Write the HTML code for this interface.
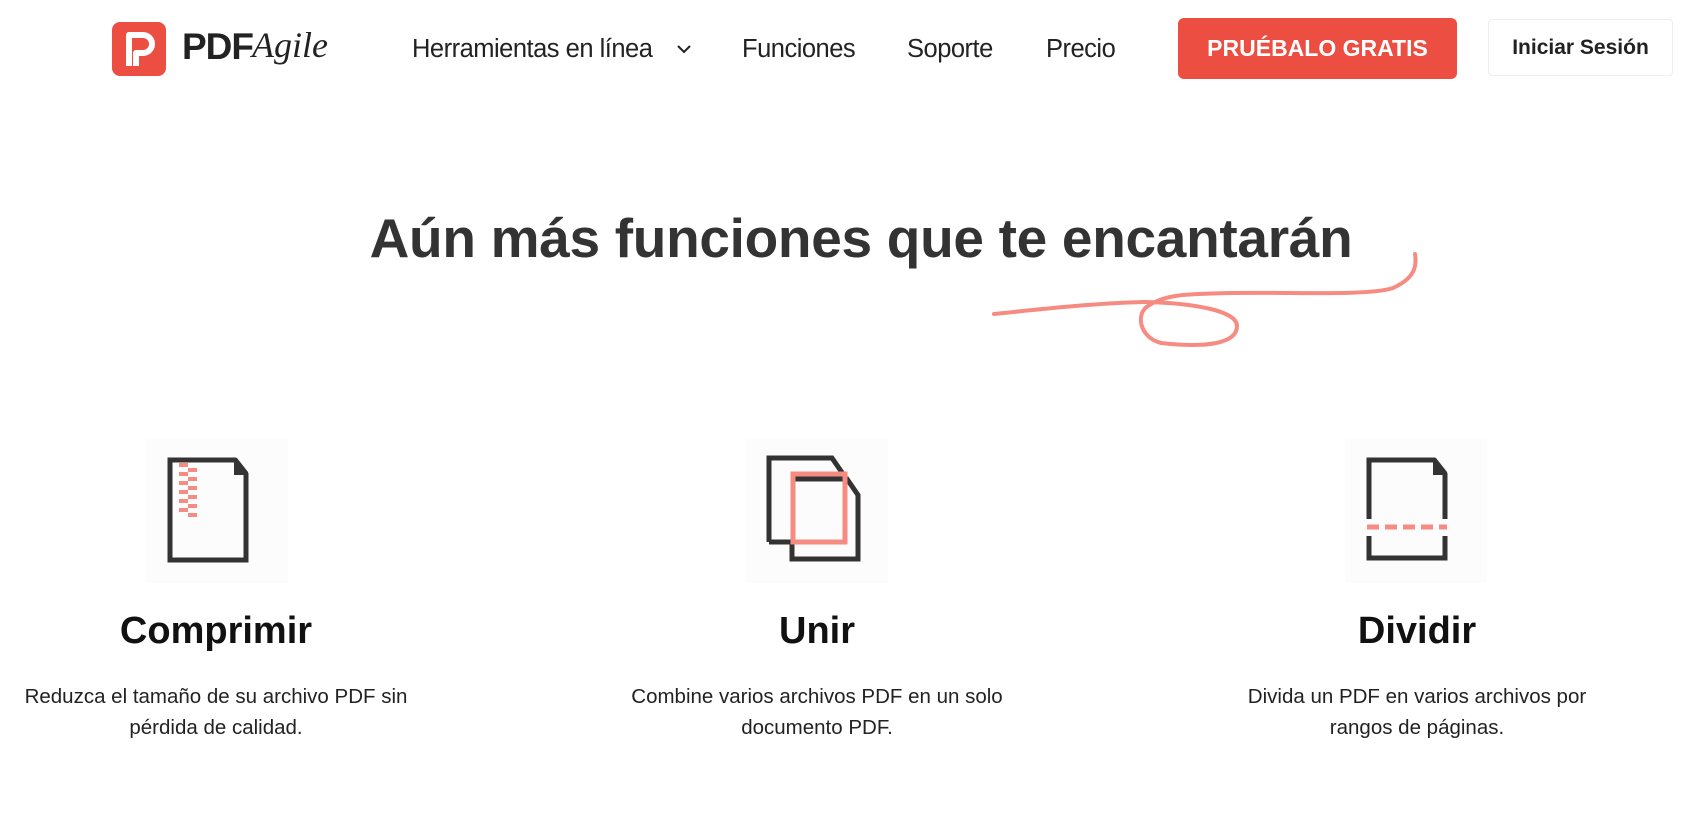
<!DOCTYPE html>
<html><head><meta charset="utf-8"><style>
*{margin:0;padding:0;box-sizing:border-box}
body{width:1693px;height:816px;background:#fff;font-family:"Liberation Sans",sans-serif;color:#333;position:relative;overflow:hidden}
.a{position:absolute}
.nav{font-size:25.5px;color:#222;top:35px;letter-spacing:-0.5px}
.btn{left:1178px;top:18px;width:279px;height:61px;background:#ec4e41;border-radius:6px;color:#fff;font-weight:bold;font-size:23px;text-align:center;line-height:61px}
.btn2{left:1488px;top:19px;width:185px;height:57px;border:1px solid #eee;border-radius:4px;font-weight:bold;font-size:21px;text-align:center;line-height:55px;color:#222}
h1{position:absolute;left:0;width:1722px;top:206px;text-align:center;font-size:55px;font-weight:bold;color:#333;letter-spacing:-0.3px}
.box{position:absolute;width:142px;height:144px;background:#fcfcfc;top:439px}
.t{position:absolute;width:500px;text-align:center;font-weight:bold;font-size:38px;color:#111;top:610px}
.d{position:absolute;width:500px;text-align:center;font-size:20.5px;color:#222;top:681px;line-height:31px}
</style></head><body>
<svg class="a" style="left:112px;top:22px" width="54" height="54" viewBox="0 0 54 54"><rect width="54" height="54" rx="8" fill="#ec4e41"/><path d="M17 44V13h14a9 9 0 0 1 0 18H24v13" fill="none" stroke="#fff" stroke-width="6" stroke-linejoin="round"/></svg>
<div class="a" style="left:182px;top:26px;font-size:37px;font-weight:bold;color:#222;letter-spacing:-1px">PDF</div>
<div class="a" style="left:252px;top:24px;font-size:36px;font-style:italic;font-family:'Liberation Serif',serif;color:#222">Agile</div>
<div class="a nav" style="left:412px">Herramientas en línea</div>
<svg class="a" style="left:677px;top:44px" width="14" height="10"><path d="M1 2l6 6 6-6" fill="none" stroke="#222" stroke-width="2"/></svg>
<div class="a nav" style="left:742px">Funciones</div>
<div class="a nav" style="left:907px">Soporte</div>
<div class="a nav" style="left:1046px">Precio</div>
<div class="a btn">PRUÉBALO GRATIS</div>
<div class="a btn2">Iniciar Sesión</div>
<h1>Aún más funciones que te encantarán</h1>
<svg class="a" style="left:990px;top:248px" width="432" height="106" viewBox="0 0 432 106"><path d="M4 66C60 60 110 55 155 54C200 55 247 62 247 78C247 96 215 100 171 95C150 90 145 66 158 58C175 46 198 46 240 45C300 44 380 48 403 40C425 30 427 18 425 6" fill="none" stroke="#f68b82" stroke-width="4" stroke-linecap="round"/></svg>

<div class="box" style="left:146px"><svg width="142" height="144"><path d="M24 21H89l11 14V121H24Z" fill="none" stroke="#333" stroke-width="5"/><path d="M88 19h3l11 14v3H88Z" fill="#333"/>
<g fill="#f68b82"><rect x="33" y="24" width="9" height="4"/><rect x="42" y="29" width="9" height="4"/><rect x="33" y="33" width="9" height="4"/><rect x="42" y="38" width="9" height="4"/><rect x="33" y="42" width="9" height="4"/><rect x="42" y="47" width="9" height="4"/><rect x="33" y="51" width="9" height="4"/><rect x="42" y="56" width="9" height="4"/><rect x="33" y="60" width="9" height="4"/><rect x="42" y="65" width="9" height="4"/><rect x="33" y="69" width="9" height="4"/><rect x="42" y="74" width="9" height="4"/></g></svg></div>

<div class="box" style="left:746px"><svg width="142" height="144"><path d="M23 103V19h63l11 16" fill="none" stroke="#333" stroke-width="5"/><path d="M23 103h22" stroke="#333" stroke-width="5"/><path d="M46 40h55l11 16v64H46v-17" fill="none" stroke="#333" stroke-width="5"/><rect x="47" y="35" width="52" height="68" fill="none" stroke="#f68b82" stroke-width="5"/></svg></div>

<div class="box" style="left:1345px"><svg width="142" height="144"><path d="M24 80V21H89l11 14V80" fill="none" stroke="#333" stroke-width="5"/><path d="M88 19h3l11 14v3H88Z" fill="#333"/><path d="M24 97V119H100V97" fill="none" stroke="#333" stroke-width="5"/><path d="M22 88H102" stroke="#f68b82" stroke-width="5" stroke-dasharray="12 6"/></svg></div>

<div class="t" style="left:-34px">Comprimir</div>
<div class="t" style="left:567px">Unir</div>
<div class="t" style="left:1167px">Dividir</div>
<div class="d" style="left:-34px">Reduzca el tamaño de su archivo PDF sin<br>pérdida de calidad.</div>
<div class="d" style="left:567px">Combine varios archivos PDF en un solo<br>documento PDF.</div>
<div class="d" style="left:1167px">Divida un PDF en varios archivos por<br>rangos de páginas.</div>
</body></html>
